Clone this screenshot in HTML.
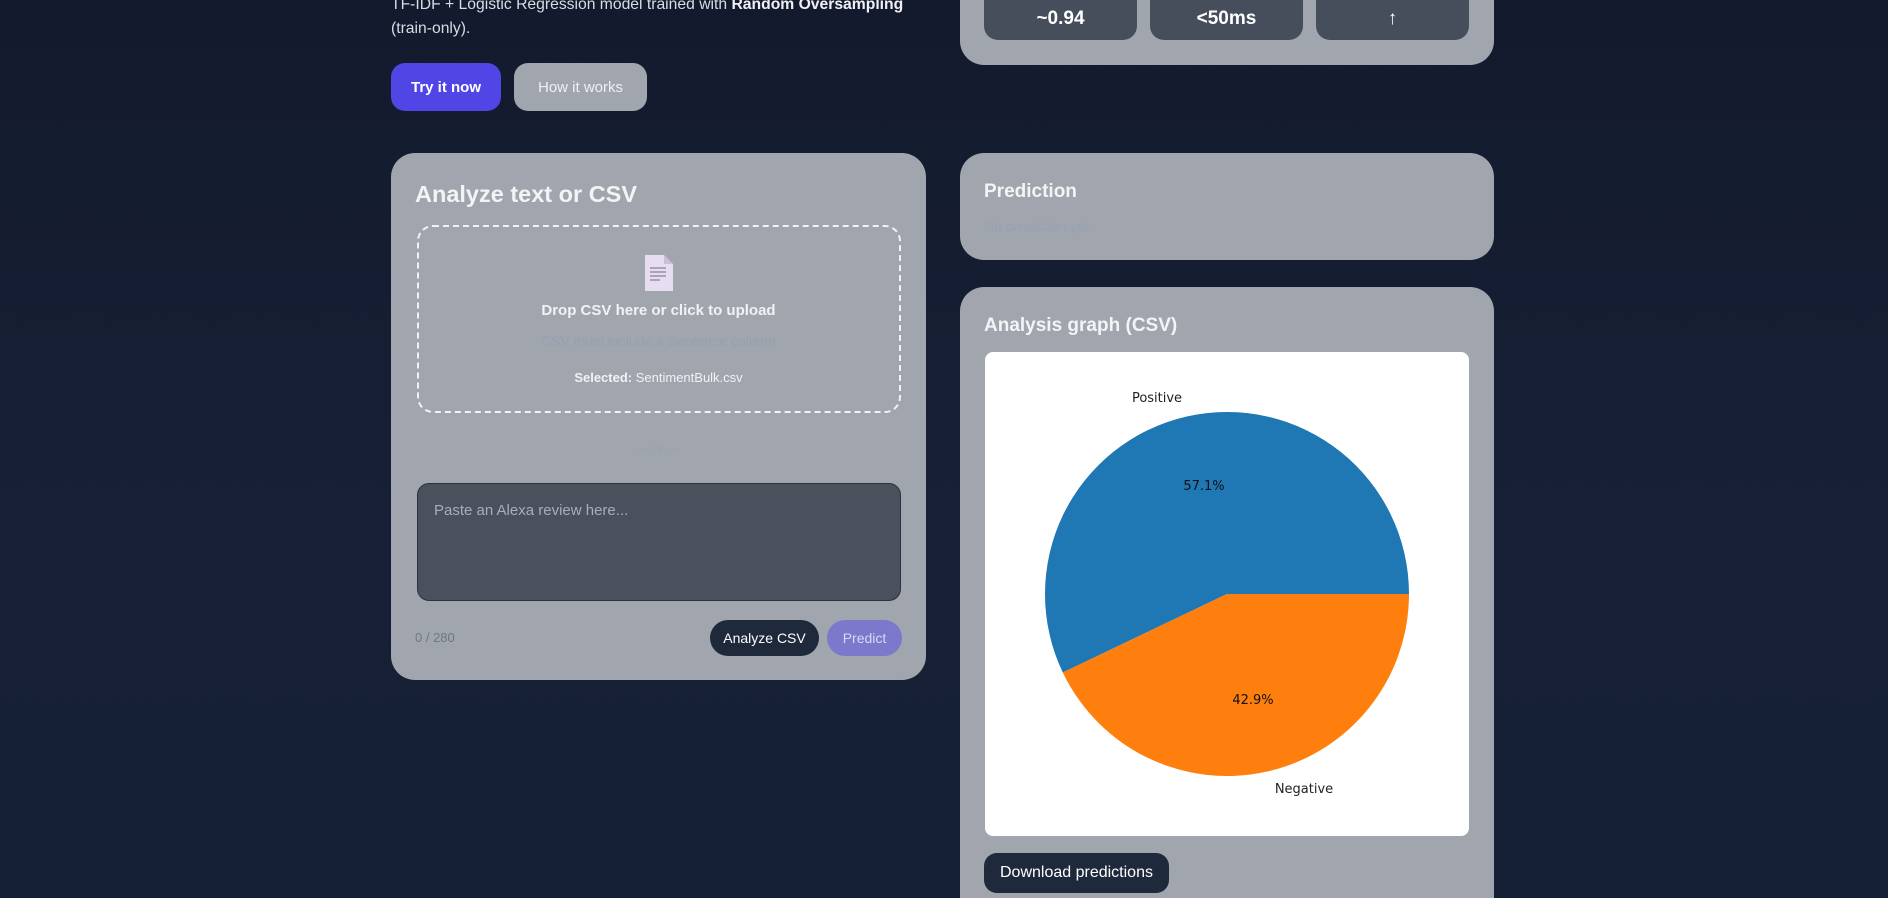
<!DOCTYPE html>
<html><head><meta charset="utf-8"><style>
*{box-sizing:border-box;margin:0;padding:0}
html,body{width:1888px;height:898px;overflow:hidden}
body{background:linear-gradient(180deg,#131a2d 0%,#172036 60%,#162034 100%);font-family:"Liberation Sans",sans-serif;color:#e5e7eb;position:relative}
.abs{position:absolute}
.card{position:absolute;background:#a1a5ad;border-radius:24px}
.btn{position:absolute;display:flex;align-items:center;justify-content:center;font-size:15px}
</style></head><body>
<div class="abs" style="left:391px;top:-7px;font-size:15.7px;line-height:24px;color:#d8dce4">TF-IDF + Logistic Regression model trained with <b style="color:#eef0f4">Random Oversampling</b><br>(train-only).</div>
<div class="btn" style="left:391px;top:63px;width:110px;height:48px;background:#4f46e5;border-radius:14px;color:#fff;font-weight:bold">Try it now</div>
<div class="btn" style="left:514px;top:63px;width:133px;height:48px;background:#a1a5ad;border-radius:14px;color:#eef0f4">How it works</div>

<div class="card" style="left:960px;top:-40px;width:534px;height:105px">
  <div class="abs" style="left:24px;top:0;width:153px;height:80px;background:#464e5c;border-radius:14px"></div>
  <div class="abs" style="left:190px;top:0;width:153px;height:80px;background:#464e5c;border-radius:14px"></div>
  <div class="abs" style="left:356px;top:0;width:153px;height:80px;background:#464e5c;border-radius:14px"></div>
  <div class="abs" style="left:24px;top:48px;width:153px;text-align:center;font-weight:bold;font-size:19px;color:#fff">~0.94</div>
  <div class="abs" style="left:190px;top:48px;width:153px;text-align:center;font-weight:bold;font-size:19px;color:#fff">&lt;50ms</div>
  <div class="abs" style="left:356px;top:48px;width:153px;text-align:center;font-weight:bold;font-size:19px;color:#fff">↑</div>
</div>

<div class="card" style="left:391px;top:153px;width:535px;height:527px">
  <div class="abs" style="left:24px;top:28px;font-size:23.5px;font-weight:bold;color:#f3f4f6">Analyze text or CSV</div>
  <div class="abs" style="left:26px;top:72px;width:484px;height:188px;border:2px dashed #f1f2f4;border-radius:16px"></div>
  <svg class="abs" style="left:253px;top:101px" width="30" height="38" viewBox="0 0 30 38"><path d="M1 1H20L29 10V37H1Z" fill="#e6ddf0"/><path d="M20 1V10H29" fill="#c9bfd6"/><path d="M6 14H22M6 18H22M6 22H22M6 26H16" stroke="#8a8099" stroke-width="1.2"/></svg>
  <div class="abs" style="left:0;top:149px;width:535px;text-align:center;font-size:15px;font-weight:bold;color:#f1f2f4">Drop CSV here or click to upload</div>
  <div class="abs" style="left:0;top:180px;width:535px;text-align:center;font-size:14px;color:#96a0b4">CSV must include a Sentence column</div>
  <div class="abs" style="left:0;top:217px;width:535px;text-align:center;font-size:13px;color:#f1f2f4"><b>Selected:</b> SentimentBulk.csv</div>
  <div class="abs" style="left:0;top:288px;width:535px;text-align:center;font-size:13px;color:#98a2b6">— or —</div>
  <div class="abs" style="left:26px;top:330px;width:484px;height:118px;background:#4a505c;border:1px solid #2c3240;border-radius:12px;padding:18px 16px;font-size:15px;color:#a8adb8">Paste an Alexa review here...</div>
  <div class="abs" style="left:24px;top:477px;font-size:13px;color:#6e7788">0 / 280</div>
  <div class="btn" style="left:319px;top:467px;width:109px;height:36px;background:#1e293b;border-radius:18px;color:#fff;font-size:14px">Analyze CSV</div>
  <div class="btn" style="left:436px;top:467px;width:75px;height:36px;background:#7c78cc;border-radius:18px;color:#d7d9ef;font-size:14px">Predict</div>
</div>

<div class="card" style="left:960px;top:153px;width:534px;height:107px">
  <div class="abs" style="left:24px;top:28px;font-size:19px;font-weight:bold;color:#f3f4f6">Prediction</div>
  <div class="abs" style="left:24px;top:65px;font-size:14px;color:#97a2b6">No prediction yet.</div>
</div>

<div class="card" style="left:960px;top:287px;width:534px;height:640px">
  <div class="abs" style="left:24px;top:28px;font-size:19px;font-weight:bold;color:#f3f4f6">Analysis graph (CSV)</div>
  <div class="abs" style="left:25px;top:65px;width:484px;height:484px;background:#fff;border-radius:8px">
    <svg width="484" height="484" style="font-family:'DejaVu Sans',sans-serif">
      <path d="M242 242 L424 242 A182 182 0 1 0 77.8 320.5 Z" fill="#1f77b4"/>
      <path d="M242 242 L77.8 320.5 A182 182 0 0 0 424 242 Z" fill="#ff7f0e"/>
      <text x="172" y="50" font-size="13" fill="#222" text-anchor="middle">Positive</text>
      <text x="219" y="138" font-size="13" fill="#111" text-anchor="middle">57.1%</text>
      <text x="268" y="352" font-size="13" fill="#111" text-anchor="middle">42.9%</text>
      <text x="319" y="441" font-size="13" fill="#222" text-anchor="middle">Negative</text>
    </svg>
  </div>
  <div class="btn" style="left:24px;top:566px;width:185px;height:40px;background:#1e293b;border-radius:13px;color:#fff;font-size:16px">Download predictions</div>
</div>
</body></html>
